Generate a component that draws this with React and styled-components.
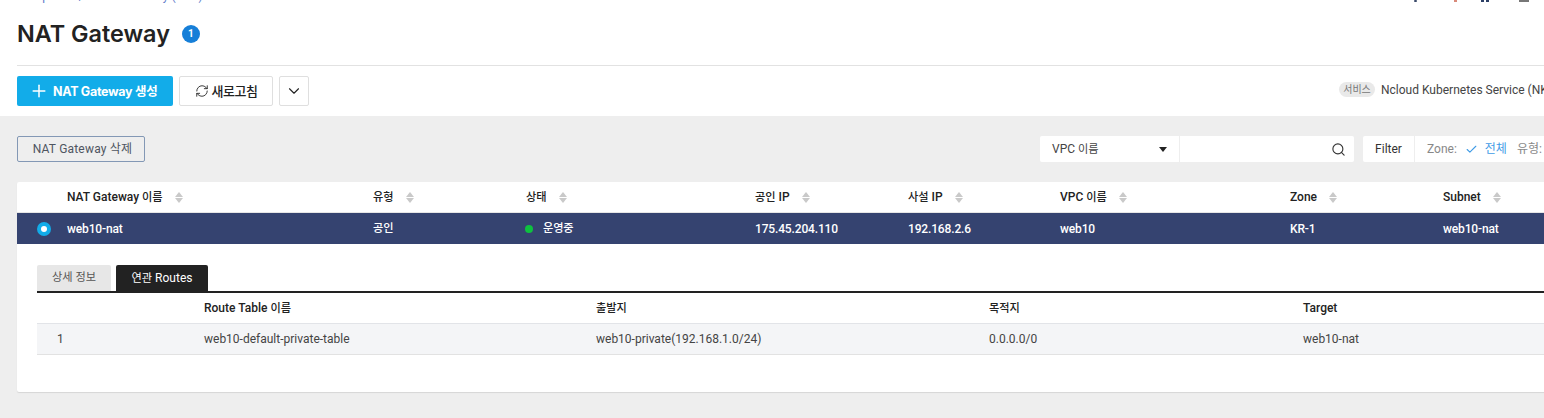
import React from "react";
import styled, { createGlobalStyle } from "styled-components";
import { Plus, RefreshCw, ChevronDown, Search, Check } from "lucide-react";

const Global = createGlobalStyle`
  html, body { margin: 0; padding: 0; background: #fff; }
  body { width: 1544px; height: 418px; overflow: hidden; font-family: Roboto, "Noto Sans CJK KR", sans-serif; line-height: 14px; }
  * { box-sizing: border-box; }
`;

const Page = styled.div`
  width: 1544px;
  height: 418px;
  overflow: hidden;
  display: flex;
  flex-direction: column;
`;

const TopStrip = styled.div`
  flex: none;
  height: 3px;
  overflow: hidden;
  display: flex;
  align-items: flex-end;
  padding-left: 17px;
  white-space: nowrap;
`;

const Crumbs = styled.div`
  display: flex;
  gap: 13px;
  width: 1393px;
  flex: none;
  font-size: 12px;
  line-height: 14px;
  color: #5b7ac9;
`;

const TopIcons = styled.svg`
  flex: none;
  display: block;
`;

const Ko = styled.span`
  font-size: 11.2px;
`;

const TitleBar = styled.div`
  flex: none;
  height: 63px;
  margin-left: 17px;
  display: flex;
  align-items: center;
  gap: 12px;
  border-bottom: 1px solid #e2e2e2;
`;

const Title = styled.h1`
  margin: 0;
  font-family: Inter, "Noto Sans CJK KR", sans-serif;
  font-size: 23.4px;
  font-weight: 600;
  color: #222;
  line-height: 30px;
`;

const Count = styled.span`
  width: 18px;
  height: 18px;
  border-radius: 50%;
  background: #167fd8;
  color: #fff;
  font-size: 10px;
  font-weight: 700;
  display: flex;
  align-items: center;
  justify-content: center;
`;

const Toolbar = styled.div`
  flex: none;
  height: 50px;
  padding: 10px 0 0 17px;
  display: flex;
  gap: 6px;
`;

const ButtonLabel = styled.span`
  margin-top: 2px;
`;

const Primary = styled.button`
  flex: none;
  width: 156px;
  height: 30px;
  border: 0;
  border-radius: 2px;
  background: #12ace9;
  color: #fff;
  font: 700 12.5px/14px Inter, "Noto Sans CJK KR", sans-serif;
  letter-spacing: -0.3px;
  display: flex;
  align-items: center;
  gap: 4px;
  padding: 0 0 0 12px;
  white-space: nowrap;
`;

const Ghost = styled.button`
  flex: none;
  width: ${(p) => p.$w}px;
  height: 30px;
  background: #fff;
  border: 1px solid #dfdfdf;
  border-radius: 2px;
  color: #222;
  font: 500 13px/14px Roboto, "Noto Sans CJK KR", sans-serif;
  letter-spacing: -0.5px;
  display: flex;
  align-items: center;
  justify-content: center;
  gap: 3px;
  padding: 0;
`;

const ServiceTag = styled.div`
  flex: none;
  margin: 6px 0 0 1024px;
  height: 15px;
  display: flex;
  align-items: center;
  gap: 6px;
  white-space: nowrap;
  font-size: 12px;
  color: #444;
`;

const Pill = styled.span`
  width: 36px;
  height: 15px;
  border-radius: 8px;
  background: #e9e9e9;
  color: #777;
  font-size: 10px;
  line-height: 15px;
  text-align: center;
`;

const Content = styled.div`
  flex: 1;
  background: #eee;
  padding: 20px 0 0 17px;
  display: flex;
  flex-direction: column;
  min-height: 0;
`;

const ActionRow = styled.div`
  display: flex;
  align-items: center;
  height: 26px;
  margin-bottom: 20px;
  flex: none;
  white-space: nowrap;
`;

const DeleteBtn = styled.button`
  flex: none;
  width: 128px;
  height: 26px;
  background: transparent;
  border: 1px solid #8398b5;
  border-radius: 2px;
  color: #4f5561;
  font: 400 12px/14px Roboto, "Noto Sans CJK KR", sans-serif;
  letter-spacing: 0.2px;
  padding: 0 0 0 3px;
`;

const SearchGroup = styled.div`
  flex: none;
  margin-left: 895px;
  display: flex;
  height: 26px;
  gap: 1px;
`;

const SelectBox = styled.div`
  width: 139px;
  background: #fff;
  display: flex;
  align-items: center;
  justify-content: space-between;
  padding: 0 12px;
  font-size: 12px;
  color: #444;
  border-radius: 2px 0 0 2px;
`;

const Caret = styled.span`
  width: 0;
  height: 0;
  border-left: 4px solid transparent;
  border-right: 4px solid transparent;
  border-top: 5px solid #222;
`;

const SearchBox = styled.div`
  width: 174px;
  background: #fff;
  display: flex;
  align-items: center;
  justify-content: flex-end;
  padding-right: 8px;
  color: #333;
  border-radius: 0 2px 2px 0;
`;

const FilterGroup = styled.div`
  margin-left: 9px;
  display: flex;
  height: 26px;
  gap: 1px;
  flex: none;
`;

const FilterLabel = styled.div`
  width: 51px;
  background: #fff;
  font-size: 12px;
  color: #333;
  display: flex;
  align-items: center;
  justify-content: center;
  border-radius: 2px 0 0 2px;
`;

const FilterBody = styled.div`
  width: 200px;
  background: #fff;
  font-size: 12px;
  color: #888;
  display: flex;
  align-items: center;
  padding-left: 12px;
  gap: 8px;
`;

const FilterValue = styled.span`
  color: #3f9be6;
  display: flex;
  align-items: center;
  gap: 7px;
  margin-right: 2px;
`;

const Card = styled.div`
  width: 1560px;
  height: 210px;
  background: #fff;
  border-radius: 2px;
  box-shadow: 0 1px 1px rgba(0, 0, 0, 0.1);
  flex: none;
`;

const HeadRow = styled.div`
  height: 31px;
  display: grid;
  grid-template-columns: ${(p) => p.$cols};
  align-items: center;
  border-bottom: 1px solid #e6e6e6;
`;

const HeadCell = styled.div`
  display: flex;
  align-items: center;
  gap: 12px;
  font-size: 12px;
  font-weight: 500;
  color: #222;
  white-space: nowrap;
`;

const SortWrap = styled.span`
  display: inline-flex;
  flex-direction: column;
  gap: 1px;
`;

const Arrow = styled.span`
  width: 0;
  height: 0;
  border-left: 4px solid transparent;
  border-right: 4px solid transparent;
  ${(p) => (p.$up ? "border-bottom: 5px solid #c9c9c9;" : "border-top: 5px solid #c9c9c9;")}
`;

const SelectedRow = styled.div`
  height: 31px;
  display: grid;
  grid-template-columns: ${(p) => p.$cols};
  align-items: center;
  background: #354370;
  color: #fff;
  font-size: 12px;
  font-weight: 500;
  letter-spacing: -0.15px;
  white-space: nowrap;
`;

const RadioCell = styled.div`
  display: flex;
  padding-left: 20px;
`;

const Radio = styled.span`
  width: 14px;
  height: 14px;
  border-radius: 50%;
  background: #12ace9;
  display: flex;
  align-items: center;
  justify-content: center;
  &::after {
    content: "";
    width: 6px;
    height: 6px;
    border-radius: 50%;
    background: #fff;
  }
`;

const Status = styled.div`
  display: flex;
  align-items: center;
  gap: 10px;
  margin-left: -1px;
`;

const Dot = styled.span`
  width: 8px;
  height: 8px;
  border-radius: 50%;
  background: #0ec13f;
`;

const Detail = styled.div`
  padding: 21px 0 0 20px;
`;

const Tabs = styled.div`
  display: flex;
  gap: 5px;
  height: 26px;
`;

const Tab = styled.div`
  width: ${(p) => p.$w}px;
  background: ${(p) => (p.$active ? "#222" : "#e7e7e7")};
  color: ${(p) => (p.$active ? "#fff" : "#555")};
  font-size: 12px;
  border-radius: 2px 2px 0 0;
  display: flex;
  align-items: center;
  justify-content: center;
  gap: 3px;
  white-space: nowrap;
`;

const SubTable = styled.div`
  border-top: 2px solid #222;
`;

const SubHead = styled.div`
  height: 31px;
  display: grid;
  grid-template-columns: ${(p) => p.$cols};
  align-items: center;
  font-size: 12px;
  font-weight: 500;
  color: #222;
  border-bottom: 1px solid #e2e4e8;
  white-space: nowrap;
`;

const SubRow = styled.div`
  height: 31px;
  display: grid;
  grid-template-columns: ${(p) => p.$cols};
  align-items: center;
  font-size: 12px;
  color: #444;
  background: #f4f5f7;
  border-bottom: 1px solid #e2e2e2;
  white-space: nowrap;
`;

const Num = styled.div`
  padding-left: 20px;
`;

const mainCols = "50px 306px 153px 229px 153px 152px 230px 153px 1fr";
const subCols = "167px 392px 393px 314px 1fr";
const heads = [
  ["NAT Gateway ", "이름"],
  ["", "유형"],
  ["", "상태"],
  ["", "공인", " IP"],
  ["", "사설", " IP"],
  ["VPC ", "이름"],
  ["Zone", ""],
  ["Subnet", ""],
];

function Sort() {
  return (
    <SortWrap>
      <Arrow $up />
      <Arrow />
    </SortWrap>
  );
}

export default function App() {
  return (
    <Page>
      <Global />
      <TopStrip>
        <Crumbs>
          <span>Compute</span>
          <span>/</span>
          <span>NAT Gateway (VPC)</span>
        </Crumbs>
        <TopIcons width="134" height="3" viewBox="0 0 134 3">
          <rect x="4" y="0" width="3" height="2" rx="1" fill="#3a4a6a" />
          <rect x="44" y="0" width="3" height="2" fill="#d98a7a" />
          <rect x="71" y="0" width="3" height="2" fill="#2c3f66" />
          <rect x="76" y="0" width="3" height="2" fill="#2c3f66" />
          <rect x="109" y="0" width="10" height="2" fill="#777" />
        </TopIcons>
      </TopStrip>
      <TitleBar>
        <Title>NAT Gateway</Title>
        <Count>1</Count>
      </TitleBar>
      <Toolbar>
        <Primary>
          <Plus size={20} strokeWidth={1.8} />
          <ButtonLabel>NAT Gateway 생성</ButtonLabel>
        </Primary>
        <Ghost $w={94}>
          <RefreshCw size={14} strokeWidth={1.5} />
          <ButtonLabel>새로고침</ButtonLabel>
        </Ghost>
        <Ghost $w={30}>
          <ChevronDown size={18} strokeWidth={1.5} />
        </Ghost>
        <ServiceTag>
          <Pill>서비스</Pill>
          Ncloud Kubernetes Service (NKS)
        </ServiceTag>
      </Toolbar>
      <Content>
        <ActionRow>
          <DeleteBtn>NAT Gateway 삭제</DeleteBtn>
          <SearchGroup>
            <SelectBox>
              <span>VPC <Ko>이름</Ko></span>
              <Caret />
            </SelectBox>
            <SearchBox>
              <Search size={15} strokeWidth={1.8} />
            </SearchBox>
          </SearchGroup>
          <FilterGroup>
            <FilterLabel>Filter</FilterLabel>
            <FilterBody>
              Zone:
              <FilterValue>
                <Check size={13} strokeWidth={2} />
                전체
              </FilterValue>
              유형:
            </FilterBody>
          </FilterGroup>
        </ActionRow>
        <Card>
          <HeadRow $cols={mainCols}>
            <div />
            {heads.map(([a, k, b]) => (
              <HeadCell key={a + k}>
                <span>
                  {a}
                  {k && <Ko>{k}</Ko>}
                  {b}
                </span>
                <Sort />
              </HeadCell>
            ))}
          </HeadRow>
          <SelectedRow $cols={mainCols}>
            <RadioCell>
              <Radio />
            </RadioCell>
            <div>web10-nat</div>
            <div><Ko>공인</Ko></div>
            <Status>
              <Dot />
              <Ko>운영중</Ko>
            </Status>
            <div>175.45.204.110</div>
            <div>192.168.2.6</div>
            <div>web10</div>
            <div>KR-1</div>
            <div>web10-nat</div>
          </SelectedRow>
          <Detail>
            <Tabs>
              <Tab $w={74}><Ko>상세 정보</Ko></Tab>
              <Tab $w={92} $active><span><Ko>연관</Ko> Routes</span></Tab>
            </Tabs>
            <SubTable>
              <SubHead $cols={subCols}>
                <div />
                <div>Route Table <Ko>이름</Ko></div>
                <div><Ko>출발지</Ko></div>
                <div><Ko>목적지</Ko></div>
                <div>Target</div>
              </SubHead>
              <SubRow $cols={subCols}>
                <Num>1</Num>
                <div>web10-default-private-table</div>
                <div>web10-private(192.168.1.0/24)</div>
                <div>0.0.0.0/0</div>
                <div>web10-nat</div>
              </SubRow>
            </SubTable>
          </Detail>
        </Card>
      </Content>
    </Page>
  );
}
